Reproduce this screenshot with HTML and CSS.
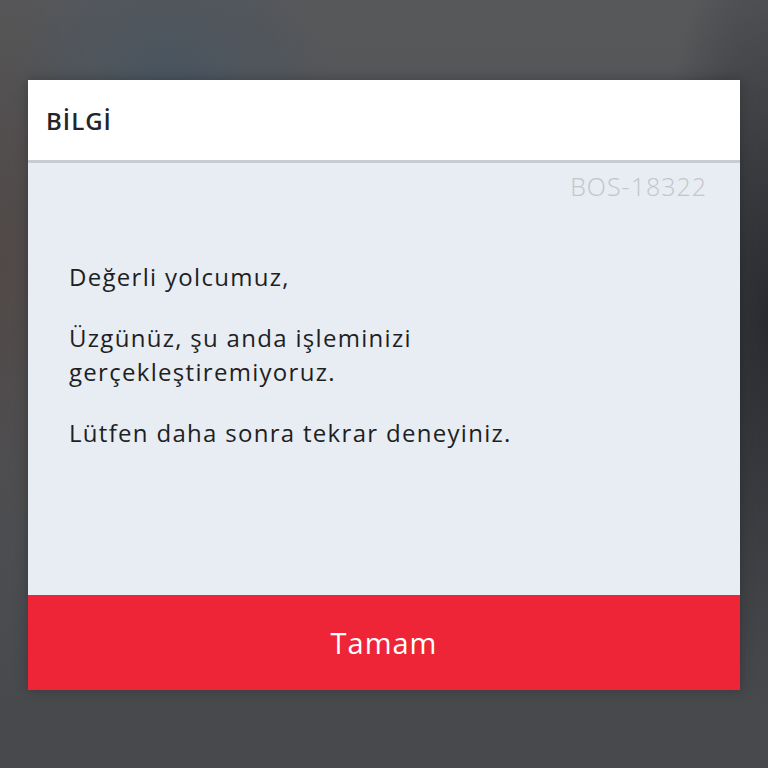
FILE: index.html
```html
<!DOCTYPE html>
<html lang="tr">
<head>
<meta charset="utf-8">
<link rel="stylesheet" href="styles.css">
</head>
<body>
<div class="backdrop">
  <div class="dialog">
    <div class="dialog-header">BİLGİ</div>
    <div class="dialog-body">
      <div class="code">BOS-18322</div>
      <div class="message">
        <p>Değerli yolcumuz,</p>
        <p>Üzgünüz, şu anda işleminizi gerçekleştiremiyoruz.</p>
        <p>Lütfen daha sonra tekrar deneyiniz.</p>
      </div>
    </div>
    <div class="dialog-button">Tamam</div>
  </div>
</div>
</body>
</html>
```
FILE: styles.css
```css
html, body {
  margin: 0;
  padding: 0;
}
body {
  width: 768px;
  height: 768px;
  overflow: hidden;
  font-family: "Open Sans", Lato, sans-serif;
}
.backdrop {
  width: 768px;
  height: 768px;
  box-sizing: border-box;
  padding: 80px 28px 0;
  background:
    radial-gradient(ellipse 160px 140px at 170px 80px, rgba(70,84,98,0.8), rgba(70,84,98,0) 100%),
    radial-gradient(ellipse 120px 300px at 0px 260px, rgba(80,70,68,0.8), rgba(80,70,68,0) 100%),
    radial-gradient(ellipse 120px 400px at 768px 320px, rgba(38,40,45,0.95), rgba(38,40,45,0) 100%),
    linear-gradient(180deg, #57585a 0%, #4f5154 50%, #46484c 100%);
}
.dialog {
  width: 712px;
  display: flex;
  flex-direction: column;
  box-shadow: 0 0 12px rgba(0,0,0,0.25);
}
.dialog-header {
  height: 80px;
  background: #ffffff;
  display: flex;
  align-items: center;
  padding-left: 18px;
  font-weight: 600;
  font-size: 24px;
  letter-spacing: 1px;
  color: #23252b;
  border-bottom: 3px solid #c8cbd0;
}
.dialog-body {
  height: 432px;
  background: #e8ecf3;
  box-sizing: border-box;
  padding: 8px 33px 0 41px;
  display: flex;
  flex-direction: column;
}
.code {
  align-self: flex-end;
  font-size: 25px;
  font-weight: 300;
  letter-spacing: 1px;
  color: #c2c5cb;
  line-height: 30px;
}
.message {
  margin-top: 59px;
  font-size: 24px;
  line-height: 34.5px;
  letter-spacing: 1.3px;
  color: #1e1f23;
  width: 460px;
}
.message p {
  margin: 0 0 26px;
}
.dialog-button {
  height: 95px;
  background: #ee2536;
  color: #ffffff;
  font-size: 29px;
  letter-spacing: 1px;
  display: flex;
  align-items: center;
  justify-content: center;
}
```
